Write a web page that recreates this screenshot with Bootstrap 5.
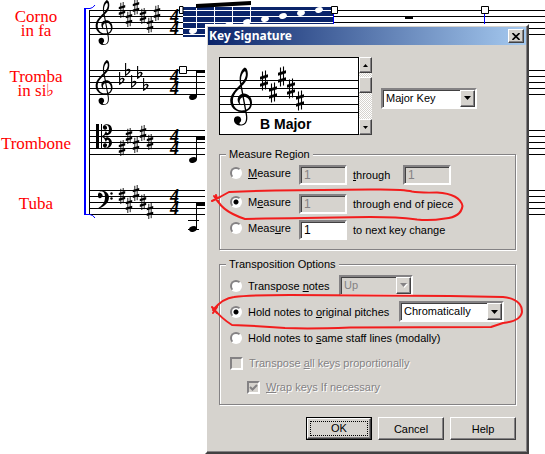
<!DOCTYPE html>
<html lang="en">
<head>
<meta charset="utf-8">
<meta name="viewport" content="width=device-width, initial-scale=1">
<title>Key Signature</title>
<link href="https://cdn.jsdelivr.net/npm/bootstrap@5.3.0/dist/css/bootstrap.min.css" rel="stylesheet">
<style>
  :root { --face: #d6d3ce; --shade: #848284; --dark: #424142; }
  body { background: #fff; color: #000; font: 11px/14px "Liberation Sans", Arial, sans-serif; }
  .score { min-height: 100vh; }
  .staves { inset: 0; width: 100%; height: 100%; }
  .parts { width: 72px; font: 17px/14px "Liberation Serif", "Times New Roman", serif; color: #f00; }
  .part { height: 48px; margin-bottom: 12px; }
  .meter { font: italic bold 18px "Liberation Serif", serif; }
  .dialog-win { left: 205px; top: 24px; width: 324px; background: var(--face); padding: 1px;
    border: 2px solid; border-color: #fff var(--dark) var(--dark) #fff; box-shadow: inset -1px -1px var(--shade); }
  .title-strip { height: 18px; background: linear-gradient(90deg, #0a246a, #a6caf0); color: #fff; padding: 0 2px 0 1px; }
  .title-strip h1 { font: bold 12px/16px "Noto Sans", sans-serif; margin: 0; }
  .raised { background: var(--face); border: 1px solid; border-color: #fff var(--dark) var(--dark) #fff;
    box-shadow: inset -1px -1px var(--shade); border-radius: 0; padding: 0; color: #000; }
  .btn-x { width: 16px; height: 14px; }
  .win-body { padding: 12px 10px 11px 11px; }
  .preview { width: 140px; height: 78px; border: 1px solid #000; background: #fff; }
  .preview svg { width: 138px; height: 76px; }
  .preview text { font: bold 14px "Liberation Sans", Arial, sans-serif; }
  .scroller { width: 13px; height: 78px; background: repeating-conic-gradient(#fff 0 25%, var(--face) 0 50%) 0 0/2px 2px; }
  .scroller button { width: 13px; height: 16px; }
  .thumb { height: 16px; margin-top: 4px; }
  .sunken { border: 2px solid; border-color: var(--shade) #fff #fff var(--shade); box-shadow: inset 1px 1px var(--dark);
    border-radius: 0; background: #fff; color: #000; font-size: 12px; height: 20px; padding: 0 3px; outline: 0; }
  .sunken:disabled, .sunken.off { background: var(--face); color: var(--shade); opacity: 1; }
  .num { width: 48px; }
  .pick { padding: 0; height: 21px; }
  .pick select { appearance: none; border: 0; background: none; width: 100%; height: 17px; line-height: 17px; font-size: 11px;
    padding: 0 18px 0 3px; color: inherit; opacity: 1; display: block; }
  .pick .drop { top: 0; right: 0; bottom: 0; width: 15px; pointer-events: none; }
  .key-pick { width: 96px; margin: 4px 0 0 9px; }
  .up-pick { width: 74px; margin-left: 6px; }
  .chrom-pick { width: 105px; margin-left: auto; }
  .etched { border: 1px solid var(--shade); box-shadow: 1px 1px #fff, inset 1px 1px #fff; padding: 4px 11px 9px 6px; }
  .etched > legend { float: none; width: auto; font-size: 11px; line-height: 14px; margin: 0; padding: 0 3px; background: var(--face); }
  .mt-region { margin-top: 12px; }
  .mt-trans { margin-top: 7px; padding-bottom: 7px; }
  .opt { height: 20px; padding-left: 4px; }
  .opt label { margin-left: 6px; line-height: 16px; white-space: nowrap; }
  .opt-mid { margin: 9px 0 6px; }
  .opt-tall { height: 21px; margin-bottom: 5px; }
  .label-col { width: 51px; flex: none; }
  .num { flex: none; }
  .next-col { width: 50px; }
  .dir-col { width: 85px; }
  .mark-radio { appearance: none; width: 12px; height: 12px; margin: 2px 0; border-radius: 50%; flex: none;
    border: 2px solid; border-color: var(--shade) #fff #fff var(--shade); background: #fff; }
  .mark-radio:checked { background: radial-gradient(circle, #000 0 2px, #fff 3px); }
  .mark-check { appearance: none; width: 13px; height: 13px; margin: 0; border: 2px solid; flex: none;
    border-color: var(--shade) #fff #fff var(--shade); background: var(--face); opacity: 1; }
  .faded { color: var(--shade); text-shadow: 1px 1px #fff; }
  .wrap-row { padding-left: 21px; }
  .tick { left: 2px; top: 3px; width: 9px; height: 8px; pointer-events: none; }
  .commands { gap: 6px; margin-top: 12px; }
  .cmd { width: 66px; height: 23px; line-height: 14px; }
  .cmd-default { outline: 1px solid #000; outline-offset: -1px; border: 2px solid; border-color: #fff var(--dark) var(--dark) #fff; padding: 2px; }
  .cmd-default span { border: 1px dotted #000; display: block; line-height: 13px; }
  .ink { inset: 0; width: 100%; height: 100%; pointer-events: none; fill: none; stroke: #f21d1d; stroke-width: 2; stroke-linecap: round; stroke-linejoin: round; }
</style>
<script src="https://cdn.jsdelivr.net/npm/bootstrap@5.3.0/dist/js/bootstrap.bundle.min.js"></script>
</head>
<body>
<main class="score position-relative overflow-hidden">
  <svg class="staves position-absolute" aria-hidden="true">
    <defs>
      <symbol id="treble" viewBox="0 0 67 177">
        <path d="M30 46C27 25 34 6 45 0C54 3 56 17 53 31C49 52 22 65 12 86C3 106 13 130 36 131C53 131 61 123 61 110C61 94 48 87 38 91C27 96 27 109 36 116C21 111 19 92 31 83C45 73 67 84 67 107C67 126 55 137 34 136C12 134-2 117 1 95C5 68 45 48 48 25C49 16 47 10 44 12C37 17 32 29 34 44L52 143C55 164 50 175 35 177C23 178 12 171 12 160A11 11 0 1 1 30 168C27 172 30 174 36 174C47 172 51 161 48 144Z"/>
      </symbol>
      <symbol id="sharp" viewBox="0 0 8 20"><path d="M2.5 1V20M5.500 0V19" stroke="#000" stroke-width="1.100"/><path d="M0 6.200L8 3.800V6.800L0 9.200ZM0 13.200L8 10.800V13.800L0 16.200Z"/></symbol>
      <symbol id="flat" viewBox="0 0 6 13"><path d="M.6 0V12.200C3 10.600 5.300 9 5 7.300C4.600 5.600 2.200 6 .8 8" fill="none" stroke="#000" stroke-width="1.100"/><path d="M3 6.200C5 5.700 6 7.400 4.800 9L2.800 11C4 9 4.200 7.400 3 6.200Z"/></symbol>
      <g id="four"><text class="meter" x="170" y="22">4</text><text class="meter" x="170" y="34">4</text></g>
      <g id="lines"><path d="M0 0H4000M0 6H4000M0 12H4000M0 18H4000M0 24H4000"/></g>
      <ellipse id="head" rx="4" ry="2.800" transform="rotate(-18)"/>
    </defs>
    <g stroke="#000" fill="none">
      <use href="#lines" x="89" y="10.500"/><use href="#lines" x="89" y="70.500"/><use href="#lines" x="89" y="130.500"/><use href="#lines" x="89" y="190.500"/>
      <path d="M89.500 10V215"/>
    </g>
    <path d="M84 8.500H90Q93 8 95 5" fill="none" stroke="#00f"/>
    <path d="M84 214.500H90Q93 215 95 218" fill="none" stroke="#00f"/>
    <path d="M84 8H86V215H84Z" fill="#00f"/>
    <use href="#treble" x="95" y="0" width="18" height="45"/>
    <use href="#treble" x="95" y="60" width="18" height="45"/>
    <g>
      <use href="#sharp" x="118" y="2" width="8" height="16"/><use href="#sharp" x="125" y="11" width="8" height="16"/><use href="#sharp" x="132" y="-1" width="8" height="16"/><use href="#sharp" x="139" y="8" width="8" height="16"/><use href="#sharp" x="146" y="17" width="8" height="16"/><use href="#sharp" x="153" y="5" width="8" height="16"/>
      <use href="#flat" x="119" y="72" width="6" height="13"/><use href="#flat" x="125" y="63" width="6" height="13"/><use href="#flat" x="131" y="75" width="6" height="13"/><use href="#flat" x="137" y="66" width="6" height="13"/><use href="#flat" x="143" y="78" width="6" height="13"/>
      <use href="#sharp" x="118" y="140" width="8" height="16"/><use href="#sharp" x="125" y="128" width="8" height="16"/><use href="#sharp" x="132" y="137" width="8" height="16"/><use href="#sharp" x="139" y="125" width="8" height="16"/><use href="#sharp" x="146" y="134" width="8" height="16"/>
      <use href="#sharp" x="118" y="188" width="8" height="16"/><use href="#sharp" x="125" y="197" width="8" height="16"/><use href="#sharp" x="132" y="185" width="8" height="16"/><use href="#sharp" x="139" y="194" width="8" height="16"/><use href="#sharp" x="146" y="203" width="8" height="16"/>
    </g>
    <g><path d="M96 124H99V149H96ZM101 124H102V149H101Z"/>
      <path d="M102 136C105 135 105 132 106 131C107 134 109 134 109 129C109 125 106 124 104 126A2 2 0 1 1 103 128C102 124 111 122 112 129C112 134 108 136 105 135L104 136.500L105 138C108 136 112 139 112 143C111 150 102 149 103 145A2 2 0 1 1 104 147C106 149 109 147 109 143C109 139 107 139 106 142C105 141 105 138 102 137Z"/>
      <path d="M98 197A2.500 2.500 0 1 0 98 194C99 190 108 189 109 197C109 203 104 207 97 209C103 205 105 202 105 197C105 191 101 190 98 194Z"/><circle cx="111.500" cy="193.500" r="1.200"/><circle cx="111.500" cy="198.500" r="1.200"/></g>
    <use href="#four"/><use href="#four" y="60"/><use href="#four" y="120"/><use href="#four" y="180"/>
    <path d="M183 7H333V37H183Z" fill="#0a246a"/>
    <path d="M183 10.500H333M183 16.500H333M183 22.500H333M183 28.500H333M183 34.500H333M196.500 7V31M214.500 7V30M232.500 7V26M250.500 7V22" stroke="#fff"/>
    <path d="M196 4L251 1V5L196 8ZM405 16H413V19H405Z"/>
    <g fill="#fff"><use href="#head" transform="translate(193 31)"/><use href="#head" transform="translate(229 25)"/><use href="#head" transform="translate(247 22)"/><use href="#head" transform="translate(265 19)"/><use href="#head" transform="translate(283 16)"/><use href="#head" transform="translate(301 13)"/><use href="#head" transform="translate(319 10)"/></g>
    <path d="M333.500 13V24M484.500 13V24" stroke="#00f"/>
    <g fill="#fff" stroke="#000"><path d="M179.500 6.500H183V13.500H179.500ZM331.500 6.500H337.500V13.500H331.500ZM481.500 6.500H488.500V13.500H481.500ZM179.500 66.500H186.500V73.500H179.500Z"/></g>
    <use href="#head" transform="translate(193 97)"/><use href="#head" transform="translate(193 160)"/><use href="#head" transform="translate(193 229)"/>
    <path d="M196.500 97V71M196.500 160V137M196.500 229V204M188 220.500H199M188 229.500H199" stroke="#000"/>
    <path d="M196 71H206V73H196ZM196 137H206V140H196ZM196 203H206V206H196Z"/>
  </svg>

  <div class="parts position-relative text-center">
    <div class="part d-flex align-items-center justify-content-center">Corno<br>in fa</div>
    <div class="part d-flex align-items-center justify-content-center">Tromba<br>in si♭</div>
    <div class="part d-flex align-items-center justify-content-center">Trombone</div>
    <div class="part d-flex align-items-center justify-content-center">Tuba</div>
  </div>

  <section class="dialog-win position-absolute" role="dialog" aria-labelledby="dlgTitle">
    <header class="title-strip d-flex align-items-center justify-content-between">
      <h1 id="dlgTitle">Key Signature</h1>
      <button type="button" class="raised btn-x d-flex align-items-center justify-content-center" aria-label="Close">
        <svg width="8" height="7" viewBox="0 0 8 7" stroke="#000" stroke-width="1.600"><path d="M.5 0L7.500 7M7.500 0L.5 7"/></svg>
      </button>
    </header>
    <form class="win-body">
      <div class="d-flex">
        <div class="preview">
          <svg class="d-block" viewBox="0 0 138 76">
            <path d="M0 22.500H138M0 30.500H138M0 38.500H138M0 46.500H138M0 54.500H138" stroke="#000"/>
            <use href="#treble" x="10" y="9" width="22" height="59"/>
            <use href="#sharp" x="40" y="12" width="8" height="21"/><use href="#sharp" x="49" y="24" width="8" height="21"/><use href="#sharp" x="58" y="8" width="8" height="21"/><use href="#sharp" x="67" y="20" width="8" height="21"/><use href="#sharp" x="76" y="32" width="8" height="21"/>
            <text x="40" y="71">B Major</text>
          </svg>
        </div>
        <div class="scroller d-flex flex-column">
          <button type="button" class="raised d-flex align-items-center justify-content-center" aria-label="Previous key"><svg width="5" height="3"><path d="M0 3L2.500 0L5 3Z"/></svg></button>
          <div class="thumb raised"></div>
          <button type="button" class="raised d-flex align-items-center justify-content-center mt-auto" aria-label="Next key"><svg width="5" height="3"><path d="M0 0L2.500 3L5 0Z"/></svg></button>
        </div>
        <div class="sunken pick key-pick position-relative align-self-center">
          <select aria-label="Key type"><option>Major Key</option><option>Minor Key</option></select>
          <span class="drop raised position-absolute d-flex align-items-center justify-content-center"><svg width="7" height="4"><path d="M0 0H7L3.500 4Z"/></svg></span>
        </div>
      </div>

      <fieldset class="etched mt-region">
        <legend>Measure Region</legend>
        <div class="opt d-flex align-items-start">
          <input class="mark-radio" type="radio" name="region" id="r1"><label for="r1" class="label-col"><u>M</u>easure</label>
          <input class="sunken num" value="1" disabled aria-label="First measure">
          <label for="to1" class="next-col align-self-center"><u>t</u>hrough</label>
          <input class="sunken num" id="to1" value="1" disabled>
        </div>
        <div class="opt d-flex align-items-start opt-mid">
          <input class="mark-radio" type="radio" name="region" id="r2" checked><label for="r2" class="label-col">M<u>e</u>asure</label>
          <input class="sunken num" id="from2" value="1" disabled>
          <label for="from2" class="align-self-center">through end of piece</label>
        </div>
        <div class="opt d-flex align-items-start">
          <input class="mark-radio" type="radio" name="region" id="r3"><label for="r3" class="label-col">Meas<u>u</u>re</label>
          <input class="sunken num" id="from3" value="1">
          <label for="from3" class="align-self-center">to next key change</label>
        </div>
      </fieldset>

      <fieldset class="etched mt-trans">
        <legend>Transposition Options</legend>
        <div class="opt opt-tall d-flex align-items-center">
          <input class="mark-radio" type="radio" name="trans" id="t1"><label for="t1" class="dir-col">Transpose <u>n</u>otes</label>
          <div class="sunken off pick up-pick position-relative">
            <select disabled aria-label="Direction"><option>Up</option></select>
            <span class="drop raised position-absolute d-flex align-items-center justify-content-center"><svg width="8" height="5"><path d="M1 1H8L4.500 5Z" fill="#fff"/><path d="M0 0H7L3.500 4Z" fill="#848284"/></svg></span>
          </div>
        </div>
        <div class="opt opt-tall d-flex align-items-center">
          <input class="mark-radio" type="radio" name="trans" id="t2" checked><label for="t2">Hold notes to <u>o</u>riginal pitches</label>
          <div class="sunken pick chrom-pick position-relative">
            <select aria-label="Pitch method"><option>Chromatically</option></select>
            <span class="drop raised position-absolute d-flex align-items-center justify-content-center"><svg width="7" height="4"><path d="M0 0H7L3.500 4Z"/></svg></span>
          </div>
        </div>
        <div class="opt opt-tall d-flex align-items-center">
          <input class="mark-radio" type="radio" name="trans" id="t3"><label for="t3">Hold notes to <u>s</u>ame staff lines (modally)</label>
        </div>
        <div class="opt d-flex align-items-center faded">
          <input class="mark-check" type="checkbox" id="c1" disabled><label for="c1">Transpose <u>a</u>ll keys proportionally</label>
        </div>
        <div class="opt d-flex align-items-center faded wrap-row mt-1">
          <span class="position-relative d-flex"><input class="mark-check" type="checkbox" id="c2" checked disabled><svg class="tick position-absolute" viewBox="0 0 9 8" fill="none" stroke="#848284" stroke-width="2"><path d="M1 3L3.500 5.500L8 1"/></svg></span><label for="c2"><u>W</u>rap keys If necessary</label>
        </div>
      </fieldset>

      <div class="commands d-flex justify-content-end">
        <button type="submit" class="raised cmd cmd-default"><span>OK</span></button>
        <button type="button" class="raised cmd">Cancel</button>
        <button type="button" class="raised cmd">Help</button>
      </div>
    </form>
  </section>

  <svg class="ink position-absolute" aria-hidden="true">
    <path d="M212 201L220 197L229 192Q250 191 275 190.500L370 189.500Q403 189 412 191.500Q420 193 437 192.500Q460 194 462.500 206Q461 217 445 218.500Q430 221 417 219.500Q400 217 370 217Q290 218 245 219Q218 210 216 195M214 196L218 202"/>
    <path d="M212 307L217 313M217 307L213 313M213 310Q223 298 234 297Q250 295 290 295L450 296L503 297Q522 299 522 312Q521 321 503 323L491 327L350 327.500Q310 329 285 328Q260 326 232 325Q221 318 214 309"/>
  </svg>
</main>
</body>
</html>
